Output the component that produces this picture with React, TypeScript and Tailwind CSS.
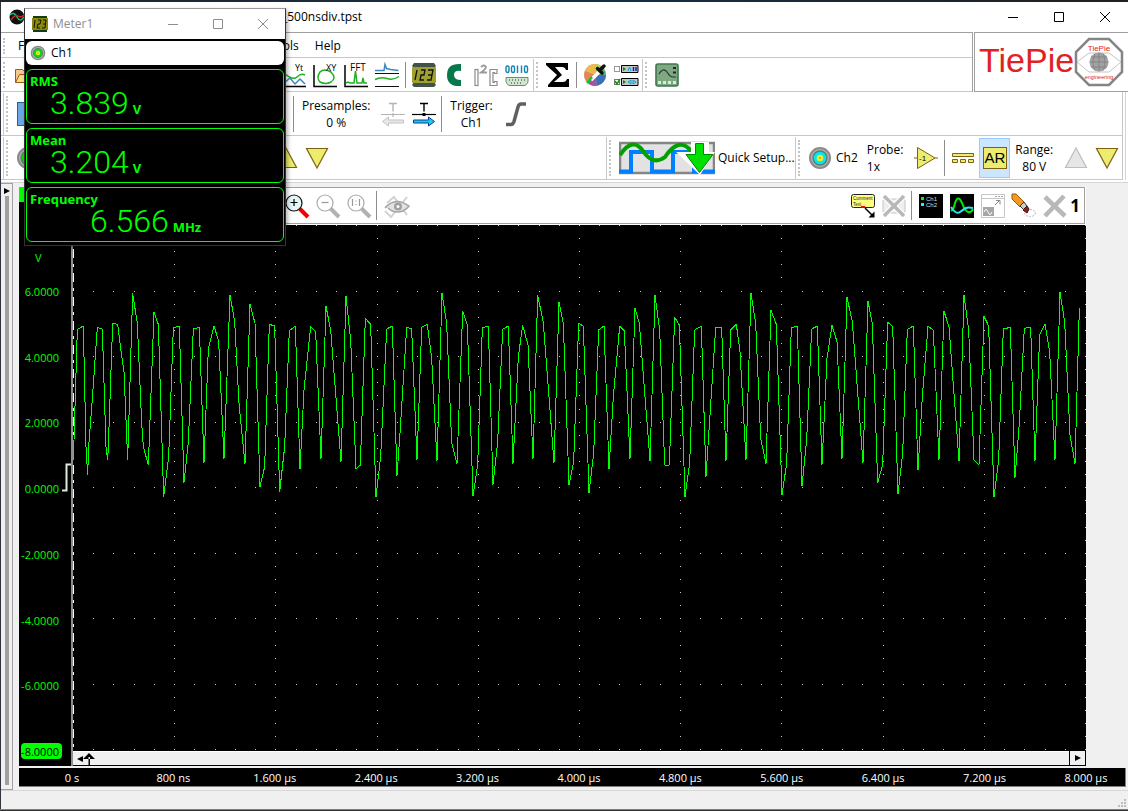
import type { ReactNode } from 'react';
import clsx from 'clsx';

const voltLabels = ['6.0000', '4.0000', '2.0000', '0.0000', '-2.0000', '-4.0000', '-6.0000', '-8.0000'];

const timeLabels = [
  '0 s',
  '800 ns',
  '1.600 µs',
  '2.400 µs',
  '3.200 µs',
  '4.000 µs',
  '4.800 µs',
  '5.600 µs',
  '6.400 µs',
  '7.200 µs',
  '8.000 µs',
];

const readings = [
  { name: 'RMS', value: '3.839', unit: 'V', indent: 'pl-5' },
  { name: 'Mean', value: '3.204', unit: 'V', indent: 'pl-5' },
  { name: 'Frequency', value: '6.566', unit: 'MHz', indent: 'pl-[60px]' },
];

// sweep memory, three blocks in thirds of a screen pixel
const sweep = [
  {
    offset: -9,
    points:
      '10,540 12,480 22,148 40,138 48,500 53,585 56,500 66,370 82,142 97,147 108,500 113,540 115,500 128,130 143,133 152,205 162,275 173,540 188,40 202,130 215,430 220,500 235,555 252,97 265,133 281,650 296,530 310,143 328,138 342,608 355,485 370,147 388,142 402,548 415,205 432,137 446,185 462,537 480,45 494,125 507,370 525,551 540,72 555,130 570,620 584,560 598,133 614,138 629,635 644,500 658,152 676,138 690,567 702,330 722,140 737,155 753,537 768,79 782,150 813,545 828,49 842,180 858,566 871,555 886,115 902,133 918,650 932,530 950,147 967,138 981,587 990,460',
  },
  {
    offset: 981,
    points:
      '0,460 20,142 35,147 51,540 65,142 82,133 95,235 111,543 126,39 140,130 155,487 171,551 188,94 202,135 219,648 233,555 247,143 265,138 279,614 293,485 308,148 325,138 339,551 355,230 368,136 384,195 399,537 413,45 430,128 462,548 477,67 490,130 507,614 521,545 536,130 550,138 567,638 581,520 596,150 612,138 627,567 640,350 659,139 673,152 690,537 705,84 718,130 750,543 765,45 779,150 794,555 808,555 824,112 838,135 855,650 869,550 884,150 904,138 918,590 947,143 965,142 978,543 992,150 1009,133 1020,215',
  },
  {
    offset: 2001,
    points:
      '0,215 18,540 33,40 47,130 62,475 78,551 93,91 109,133 126,644 140,550 154,143 172,138 186,617 200,480 215,147 232,138 246,554 261,235 276,136 291,185 306,537 321,52 337,125 369,548 384,64 397,130 413,608 428,555 443,127 458,139 474,641 488,520 502,148 520,138 534,570 547,350 564,139 580,150 597,540 612,94 627,140 657,543 672,45 686,150 702,540 717,554 732,109 746,138 762,650 776,540 790,147 811,142 825,593 838,430 853,145 872,142 885,543 899,163 915,133 929,215 945,540 960,37 974,125 990,465 1005,551 1018,84',
  },
];

function gridPath() {
  let d = '';
  for (let i = 1; i <= 50; i++) {
    for (let j = 0; j <= 40; j++) {
      if (i % 5 !== 0 && j % 5 !== 0) continue;
      const x = Math.round(i * 20.24) * 3;
      const y = Math.round(j * 13.11) * 3;
      d += `M${x} ${y}h3v3h-3z`;
    }
  }
  return d;
}

function Tool({ label, children, width = 24 }: { label: string; children: ReactNode; width?: number }) {
  return (
    <button type="button" aria-label={label} className="shrink-0">
      <svg width={width} height={24} viewBox={`0 0 ${width} 24`} fill="none" className="overflow-visible">
        {children}
      </svg>
    </button>
  );
}

function Sep() {
  return (
    <div className="flex w-[13px] shrink-0 justify-center self-stretch py-[3px]">
      <div className="w-px bg-[#8c8c8c]" />
    </div>
  );
}

function Grip({ line = true }: { line?: boolean }) {
  return (
    <div className={clsx('flex w-[13px] shrink-0 self-stretch py-[3px] pl-[2px]', line && 'border-l border-[#c8c8c8]')}>
      <div className="w-0 border-l-2 border-dotted border-[#c4c4c4]" />
    </div>
  );
}

function Stack({ top, bottom, left }: { top: string; bottom: string; left?: boolean }) {
  return (
    <div className={clsx('flex shrink-0 flex-col text-xs leading-[17px]', !left && 'items-center')}>
      <span>{top}</span>
      <span>{bottom}</span>
    </div>
  );
}

function Connector({ color }: { color: string }) {
  return (
    <>
      <circle cx="12" cy="12" r="10" fill="#b4b4b4" stroke="#8a8a8a" strokeWidth="2" />
      <circle cx="12" cy="12" r="7" fill={color} stroke="#5c7a7a" strokeWidth="1.4" />
      <circle cx="12" cy="12" r="3.3" fill="#f2e635" />
      <circle cx="12" cy="12" r="0.8" fill="#a07800" />
    </>
  );
}

function Triangle({ down, off }: { down?: boolean; off?: boolean }) {
  return (
    <path
      d={down ? 'M1.5 2.5h21L12 22z' : 'M1.5 21.500h21L12 2z'}
      fill={off ? '#e6e6e6' : '#ecec6e'}
      stroke={off ? '#bdbdbd' : '#806010'}
      strokeWidth="1.2"
    />
  );
}

function WindowButtons({ faded }: { faded?: boolean }) {
  return (
    <div className={clsx('flex', faded ? 'gap-[21px] text-[#8e8e8e]' : 'gap-[22px] text-black')}>
      <Tool label="Minimize"><path d="M7 12.500h10" stroke="currentColor" /></Tool>
      <Tool label="Maximize"><path d="M7.500 7.500h9v9h-9z" stroke="currentColor" /></Tool>
      <Tool label="Close"><path d="M7 7l10 10M17 7L7 17" stroke="currentColor" /></Tool>
    </div>
  );
}

function Logo() {
  return (
    <div className="flex w-[154px] shrink-0 items-center border-t border-b border-l border-[#a0a0a0] pl-1">
      <span className="pb-[5px] font-['Liberation_Sans',sans-serif] text-[34px] leading-[48px] text-[#e12222]">TiePie</span>
      <svg width="50" height="50" viewBox="0 0 50 50" fill="none" className="shrink-0">
        <path d="M15 2h20l13 13v20L35 48H15L2 35V15z" stroke="#858585" strokeWidth="2.500" />
        <path d="M3 25L15 16h20l12 9-12 10H15z" stroke="#c4c4c4" />
        <circle cx="25" cy="25" r="9.500" fill="#a2a2a2" />
        <path d="M25 15.500v19M15.500 25h19M17 20h16M17 30h16M21 16.500q-4 8.500 0 17M29 16.500q4 8.500 0 17" stroke="#7d7d7d" strokeWidth="0.7" />
        <text x="25" y="14" textAnchor="middle" fontSize="8" fontFamily="Liberation Sans" fill="#e12222">TiePie</text>
        <text x="25" y="42" textAnchor="middle" fontSize="5.500" fontFamily="Liberation Sans" fill="#e12222">engineering</text>
      </svg>
    </div>
  );
}

function MainToolbar() {
  return (
    <div className="flex h-[34px] items-center border-b border-[#c8c8c8] pt-px">
      <Grip line={false} />
      <div className="flex w-[268px] shrink-0">
        <Tool label="Open">
          <path d="M1.500 19.500v-13h7l2 2h8v3" fill="#f8c890" stroke="#a05a10" />
          <path d="M1.500 19.500l4-8h17l-4 8z" fill="#fae08c" stroke="#a05a10" />
        </Tool>
      </div>
      <div className="flex shrink-0 gap-[7px]">
        <Tool label="Yt graph">
          <path d="M1.500 1v22.500H24" stroke="#000" strokeWidth="1.500" />
          <path d="M2 20l6-5 5 6 5-5 5 5" stroke="#3a88c0" strokeWidth="1.500" />
          <path d="M2 10q9 8 13 4t8-2" stroke="#1fb01f" strokeWidth="1.500" />
          <text x="13" y="8" fontSize="9" fontFamily="Open Sans" fill="#000">Yt</text>
        </Tool>
        <Tool label="XY graph">
          <path d="M1 2v21.500H24" stroke="#000" strokeWidth="1.500" />
          <path d="M7 9q4-4 11 0 6 6 0 10-5 3-11 0-4-4 0-10z" stroke="#1fb01f" strokeWidth="1.500" />
          <text x="13" y="8" fontSize="9" fontFamily="Open Sans" fill="#000">XY</text>
        </Tool>
        <Tool label="FFT graph">
          <path d="M1 2v21.500H24" stroke="#000" strokeWidth="1.500" />
          <path d="M2 20l2-1 2 1h4l1.500-12L13 20h5l1-5 1 5h3" stroke="#1fb01f" strokeWidth="1.500" />
          <text x="6" y="8" fontSize="10" fontFamily="Open Sans" fill="#000">FFT</text>
        </Tool>
        <Tool label="Value windows">
          <path d="M0 7.500h9l1-6 1.500 4 4 1 8 1" stroke="#3a88c0" strokeWidth="1.500" />
          <path d="M0 16.500q6-3 12-1t12-2" stroke="#1fb01f" strokeWidth="1.500" />
          <path d="M0 10.500h24M0 23.500h24" stroke="#111" />
        </Tool>
      </div>
      <Sep />
      <div className="flex shrink-0 gap-[7px]">
        <Tool label="Meter">
          <path d="M2 0h20l2 3-2 2v14l2 3-2 2H2l-2-2 2-3V5L0 3z" fill="#42524a" />
          <rect x="0" y="4" width="24" height="16" rx="1" fill="#a0a030" />
          <path d="M5 7L3 17M9 7h4l-1 5H9l-1 5h4M16 7h5l-2 10h-4M16 12h4" stroke="#111" strokeWidth="1.300" />
        </Tool>
        <Tool label="Controller">
          <path d="M18 1v7q-7-1-7 4t7 5v6Q4 24 4 12T18 1z" fill="#07794a" />
        </Tool>
        <Tool label="I2C">
          <rect x="1" y="6.500" width="3" height="16" stroke="#8c8c8c" strokeWidth="1.200" />
          <path d="M7 4q3-3 5 0 0 2-5 5.500h6" stroke="#999" strokeWidth="1.800" />
          <path d="M23 10.500v-4h-7v16h7v-4h-2.500v1h-1.500v-10h1.500v1z" stroke="#8c8c8c" strokeWidth="1.200" />
        </Tool>
        <Tool label="Serial">
          <g stroke="#1283b5" strokeWidth="1.400">
            <rect x="1" y="3" width="3" height="6.500" rx="1.500" />
            <rect x="6.500" y="3" width="3" height="6.500" rx="1.500" />
            <path d="M12.500 2.500v7.500M16.500 2.500v7.500" />
            <rect x="19.500" y="3" width="3" height="6.500" rx="1.500" />
          </g>
          <path d="M1 14.500h22v4q0 2-3 4H4q-3-2-3-4z" fill="#cfe6cf" stroke="#6b8c70" />
          <path d="M4 17h16M6 20h12" stroke="#333" strokeDasharray="1 2" />
        </Tool>
      </div>
      <div className="w-1 shrink-0" />
      <Grip />
      <Tool label="Sum"><path d="M0 0h22v7h-2q-1-3-4-3H9l7 8-8 7h9q3 0 4-3h2v8H2v-2l9-10L0 2z" fill="#000" /></Tool>
      <Sep />
      <div className="flex shrink-0 gap-[7px]">
        <Tool label="Colors">
          <circle cx="12" cy="12" r="11" fill="#c8b0a0" />
          <path d="M12 12V1A11 11 0 0 0 2 8z" fill="#efb84a" />
          <path d="M12 12L2 8a11 11 0 0 0 2 11z" fill="#e58455" />
          <path d="M12 12L4 19a11 11 0 0 0 10 3.800z" fill="#a64fa5" />
          <path d="M12 12l2 10.800A11 11 0 0 0 23 12z" fill="#3a70b8" />
          <path d="M12 12h11a11 11 0 0 0-5-9z" fill="#56b07b" />
          <path d="M12 12l6-9a11 11 0 0 0-6-2z" fill="#b9cf5c" />
          <path d="M17 8L8 17" stroke="#fff" strokeWidth="3.500" />
          <path d="M9 14l-5 6" stroke="#00d020" strokeWidth="2.500" />
          <path d="M14.500 5.500l4.500 4.500M17 7l4-4" stroke="#111" strokeWidth="3.500" strokeLinecap="round" />
        </Tool>
        <Tool label="Object list">
          <rect x="0.500" y="3.500" width="5" height="5" stroke="#999" />
          <rect x="0.500" y="16.500" width="5" height="5" stroke="#777" />
          <path d="M1 18l2 3 3-5" stroke="#0b9b0b" strokeWidth="1.500" />
          <path d="M7.500 2.500h16.500v7h-16.500zM7.500 15.500h16.500v7h-16.500z" fill="#c6c6c6" stroke="#000" />
          <path d="M9 4l3 2-3 2zM9 17l3 2-3 2z" fill="#0a8a0a" />
          <path d="M14 8l1.500-4L17 8M17 17l-3 2 3 2zM19 17l3 2-3 2z" stroke="#00a6d8" />
          <path d="M19.500 4v4M22 4v4" stroke="#1313b8" strokeWidth="1.400" />
        </Tool>
      </div>
      <div className="w-1 shrink-0" />
      <Grip />
      <Tool label="Oscilloscope">
        <rect x="1" y="1" width="22" height="22" rx="2" fill="#80a880" stroke="#3d7850" strokeWidth="1.600" />
        <path d="M4 11q4-7 8-2 3 5 6 5h3" stroke="#22373c" strokeWidth="1.200" />
        <path d="M18 5h3M18 9.500h3" stroke="#223" strokeWidth="2" />
        <path d="M3 19.500h18" stroke="#d5edd5" strokeWidth="3" strokeDasharray="3 2" />
      </Tool>
    </div>
  );
}

function InstrumentBar() {
  return (
    <div className="flex h-11 items-center border-b border-[#c8c8c8] pt-px pl-[2px]">
      <Grip />
      <button type="button" aria-label="Stop" className="ml-px h-6 w-[271px] shrink-0">
        <span className="block h-6 w-6 border border-[#2060a0] bg-[#6ca6e4]" />
      </button>
      <div className="mr-2 ml-[5px] h-9 w-px shrink-0 bg-[#8c8c8c]" />
      <Stack top="Presamples:" bottom="0 %" />
      <div className="ml-[11px] flex shrink-0 gap-[7px]">
        <Tool label="Less presamples">
          <path d="M8 1.500h8M12 1.500v8" stroke="#b4b4b4" strokeWidth="1.400" />
          <path d="M0 12.500h24M12 11v4" stroke="#b4b4b4" strokeWidth="1.200" />
          <path d="M1.500 19.500l6-4.500v3h15v3h-15v3z" fill="#e8e8e8" stroke="#c2c2c2" />
        </Tool>
        <Tool label="More presamples">
          <path d="M8 1.500h8M12 1.500v8" stroke="#000" strokeWidth="1.400" />
          <path d="M0 12.500h24" stroke="#000" strokeWidth="1.200" />
          <rect x="10.500" y="11" width="3" height="3" fill="#000" />
          <path d="M22.500 19.500l-6-4.500v3h-15v3h15v3z" fill="#10d0e8" stroke="#103a9a" />
        </Tool>
      </div>
      <div className="mr-2 ml-[5px] h-9 w-px shrink-0 bg-[#8c8c8c]" />
      <Stack top="Trigger:" bottom="Ch1" />
      <div className="ml-[11px] flex">
        <Tool label="Trigger kind"><path d="M2 22.500h5q2 0 3-3L14 5q1-3 3-3h5" stroke="#606060" strokeWidth="3.500" /></Tool>
      </div>
    </div>
  );
}

function ChannelBar() {
  return (
    <div className="flex h-11 items-center border-b border-[#c8c8c8] pt-px pl-[2px]">
      <Grip />
      <div className="flex w-[258px] shrink-0"><Tool label="Ch1"><Connector color="#00e000" /></Tool></div>
      <div className="flex w-[332px] shrink-0 gap-[7px]">
        <Tool label="Ch1 range up"><Triangle /></Tool>
        <Tool label="Ch1 range down"><Triangle down /></Tool>
      </div>
      <Grip />
      <button type="button" className="flex w-[176px] shrink-0 items-center gap-[3px] text-xs whitespace-nowrap">
        <svg width="96" height="34" viewBox="0 0 96 34" fill="none" className="shrink-0">
          <rect x="1" y="2" width="94" height="30" fill="#e2e2e2" stroke="#858585" strokeWidth="2.500" />
          <path d="M0 30.500h12V11h21v19.500h21V11h21v19.500h21" stroke="#0080ff" strokeWidth="4" />
          <path d="M1 14Q14-5 24 10T46 16Q60-5 72 10" stroke="#00a000" strokeWidth="4" />
          <path d="M57 11h15V1h18v10h6L81 34z" fill="#fff" />
          <path d="M76.500 2.500h8v11h9.500L80.500 31.500 67 13.500h9.500z" fill="#00e000" stroke="#008a00" />
        </svg>
        Quick Setup...
      </button>
      <Grip />
      <div className="flex shrink-0"><Tool label="Ch2"><Connector color="#00e8e8" /></Tool></div>
      <span className="mr-[9px] ml-1 text-xs">Ch2</span>
      <Stack top="Probe:" bottom="1x" left />
      <div className="ml-[11px] flex shrink-0">
        <Tool label="Invert">
          <path d="M0 12h3M21 12h3" stroke="#806010" strokeWidth="1.200" />
          <path d="M3.500 1.500v21L21 12z" fill="#ecec6e" stroke="#806010" />
          <text x="5" y="15" fontSize="8" fontFamily="Liberation Sans" fill="#000">-1</text>
        </Tool>
      </div>
      <Sep />
      <div className="flex shrink-0">
        <Tool label="Coupling">
          <path d="M1.500 7.500h21v3h-21zM1.500 13.500h5v3h-5zM9.500 13.500h5v3h-5zM17.500 13.500h5v3h-5z" fill="#ecec6e" stroke="#806010" />
        </Tool>
      </div>
      <button type="button" className="ml-1 flex h-10 w-[31px] shrink-0 items-center justify-center border border-[#99ccff] bg-[#cce6ff]">
        <span className="flex h-[22px] w-6 items-center justify-center border border-[#806010] bg-[#ecec6e] font-['Liberation_Sans',sans-serif] text-[15px]">AR</span>
      </button>
      <div className="mr-[11px] ml-[5px]"><Stack top="Range:" bottom="80 V" /></div>
      <div className="flex shrink-0 gap-[7px]">
        <Tool label="Ch2 range up"><Triangle off /></Tool>
        <Tool label="Ch2 range down"><Triangle down /></Tool>
      </div>
    </div>
  );
}

function GraphToolbar() {
  return (
    <div className="mr-px flex h-[37px] items-center justify-between border border-[#a0a0a0] bg-white pr-1">
      <div className="flex items-center pl-[211px]">
        <div className="flex gap-[7px]">
          <Tool label="Zoom in">
            <path d="M14 14l9 9" stroke="#f00000" strokeWidth="4" />
            <circle cx="9" cy="9" r="8" fill="#e4f8fa" stroke="#111" strokeWidth="1.200" />
            <path d="M5.500 8.500h7M9 5v7" stroke="#000" strokeWidth="1.200" />
          </Tool>
          <Tool label="Zoom out">
            <path d="M14 14l9 9" stroke="#b2b2b2" strokeWidth="4" />
            <circle cx="9" cy="9" r="8" fill="#fff" stroke="#aaa" strokeWidth="1.200" />
            <path d="M5.500 8.500h7" stroke="#999" strokeWidth="1.200" />
          </Tool>
          <Tool label="Zoom 1:1">
            <path d="M14 14l9 9" stroke="#b2b2b2" strokeWidth="4" />
            <circle cx="9" cy="9" r="8" fill="#fff" stroke="#aaa" strokeWidth="1.200" />
            <path d="M5.500 5v7M12.500 5v7M9 6.500v1M9 10v1" stroke="#999" strokeWidth="1.200" />
          </Tool>
        </div>
        <div className="mr-2 ml-[5px] h-[29px] w-px bg-[#8c8c8c]" />
        <Tool label="Show">
          <path d="M0 17L6 23 22 3M2 9l7-6 13 18" stroke="#d2d2d2" strokeWidth="2" />
          <path d="M0 14q10-12 24-2-2 3-6 5-9 3-15-3" fill="#e2e2e2" stroke="#a4a4a4" strokeWidth="1.500" />
          <circle cx="13" cy="12.500" r="4" fill="#a0a0a0" />
          <circle cx="13" cy="12.500" r="1.500" fill="#fff" />
        </Tool>
      </div>
      <div className="flex items-center">
        <div className="flex gap-[7px]">
          <Tool label="Add comment">
            <rect x="0.500" y="0.500" width="23" height="13" rx="2" fill="#ffff80" stroke="#222" />
            <text x="2" y="6" fontSize="4.500" fontFamily="Liberation Sans" fill="#222">Comment</text>
            <text x="2" y="11.500" fontSize="4.500" fontFamily="Liberation Sans" fill="#222">Text</text>
            <path d="M14 14l7 7" stroke="#000" strokeWidth="1.500" />
            <path d="M23.500 23.500v-6l-6 6z" fill="#000" />
            <rect x="10" y="12" width="4" height="2" fill="#f00" />
          </Tool>
          <Tool label="Remove comments">
            <rect x="1" y="5" width="22" height="14" rx="2" fill="#eee" stroke="#c6c6c6" />
            <path d="M2 2l20 20M22 2L2 22" stroke="#fff" strokeWidth="6" />
            <path d="M2 2l20 20M22 2L2 22" stroke="#b8b8b8" strokeWidth="3.500" />
          </Tool>
        </div>
        <div className="mr-[7px] ml-[5px] h-[29px] w-px bg-[#8c8c8c]" />
        <div className="flex gap-[7px]">
          <Tool label="Legend">
            <rect width="24" height="24" fill="#000" />
            <rect x="2" y="3" width="3" height="3" fill="#0f0" />
            <rect x="2" y="9" width="3" height="3" fill="#0ff" />
            <text x="7" y="7" fontSize="6" fontFamily="Liberation Sans" fill="#ddd">Ch1</text>
            <text x="7" y="13" fontSize="6" fontFamily="Liberation Sans" fill="#ddd">Ch2</text>
          </Tool>
          <Tool label="Envelope">
            <rect width="24" height="24" fill="#000" />
            <path d="M1 17q3-2 4-8 3-9 7 0 3 8 6 9t5-3" stroke="#00e800" strokeWidth="2" />
            <path d="M1 13q5 8 9 5t6-4 7 0" stroke="#20e8e8" strokeWidth="2" />
          </Tool>
          <Tool label="Copy to new graph">
            <path d="M0.500 0.500h23v23H0.500zM0.500 4.500h23" stroke="#c6c6c6" />
            <path d="M14 2.500h8" stroke="#aaa" strokeDasharray="2 1" />
            <rect x="2" y="13" width="11" height="9" fill="#a6a6a6" />
            <path d="M3 18q2-5 4 0t4 0" stroke="#fff" />
            <path d="M14 11l5-5M15 6.500h4v4" stroke="#888" />
          </Tool>
          <Tool label="Erase">
            <ellipse cx="18" cy="19" rx="5.500" ry="3.500" stroke="#bbb" strokeDasharray="2 1" />
            <path d="M0 0l4 0 8 8-4 5-8-8z" fill="#f09a20" stroke="#a05800" />
            <path d="M12 8l3 4-3 4-4-4z" fill="#ccc" stroke="#333" />
            <path d="M15 12l2 3-2 4-4-3z" fill="#8e2020" stroke="#401010" />
          </Tool>
          <Tool label="Remove"><path d="M2 3l20 19M21 2L2 22" stroke="#b8b8b8" strokeWidth="4.500" /></Tool>
        </div>
        <span className="ml-[3px] text-[17px] leading-6 font-bold">1</span>
      </div>
    </div>
  );
}

function Meter() {
  return (
    <section className="absolute top-2 left-6 w-[262px] border border-[#333] border-t-[#999] bg-black shadow-[2px_2px_4px_rgba(0,0,0,0.3)]">
      <header className="flex h-[30px] items-center justify-between bg-white pr-[10px] pl-[7px] text-xs text-[#8e8e8e]">
        <div className="flex items-center gap-[5px]">
          <svg width="16" height="16" viewBox="0 0 16 16" fill="none">
            <path d="M1 0h14v16H1z" fill="#123d12" />
            <path d="M0 2h16v12H0z" fill="#8a8a08" />
            <path d="M3 4L2 12M6 4h3L8 8H6l-1 4h3M11 4h3l-1 8h-3M11 8h3" stroke="#111" />
          </svg>
          Meter1
        </div>
        <WindowButtons faded />
      </header>
      <div className="flex flex-col gap-1 p-px pt-[2px] pb-[3px]">
        <div className="flex h-6 items-center gap-[5px] rounded-md bg-white pl-1 text-xs">
          <svg width="16" height="16" viewBox="0 0 24 24"><Connector color="#00e000" /></svg>
          Ch1
        </div>
        {readings.map((r) => (
          <div key={r.name} className="h-[55px] rounded-md border border-[#00ff00] pt-[2px] pl-[3px] text-[13px] font-bold text-[#00ff00]">
            <div className="leading-[18px]">{r.name}</div>
            <div className={clsx('flex items-baseline gap-1 pt-px leading-6', r.indent)}>
              <span className="font-['Roboto',sans-serif] text-[32px] leading-6 font-light">{r.value}</span>
              <span>{r.unit}</span>
            </div>
          </div>
        ))}
      </div>
    </section>
  );
}

function Plot() {
  return (
    <svg className="block min-h-0 w-full flex-1 bg-black" viewBox="0 0 3039 1578" preserveAspectRatio="none" fill="none" shapeRendering="crispEdges">
      <path d={gridPath()} fill="#c8c8c8" />
      <path d="M1.500 0V1578" stroke="#fff" strokeWidth="3" strokeDasharray="27 18 9 18" />
      {sweep.map((block) => (
        <polyline
          key={block.offset}
          points={block.points}
          transform={`translate(${block.offset} 165)`}
          stroke="#00ff00"
          strokeWidth="3"
          strokeLinejoin="bevel"
        />
      ))}
    </svg>
  );
}

export default function App() {
  return (
    <div className="relative flex h-screen flex-col overflow-hidden bg-[#f0f0f0] font-['Open_Sans',sans-serif] text-black">
      <div className="h-[2px] shrink-0 bg-linear-to-r from-[#20242c] via-[#123048] to-[#202020]" />
      <div className="flex min-h-0 flex-1 flex-col border-l border-[#30343c]">
        <header className="flex h-[30px] shrink-0 items-center justify-between bg-white pr-[11px] pl-2">
          <div className="flex items-center">
            <svg width="16" height="16" viewBox="0 0 16 16" fill="none">
              <circle cx="8" cy="8" r="7.500" fill="#111" />
              <path d="M1 6q4-4 7 2t7 0" stroke="#00c878" strokeWidth="1.500" />
              <path d="M2 11q4-6 7-4t6-1" stroke="#e02020" strokeWidth="1.500" />
            </svg>
            <h1 className="pl-[257px] text-xs">_500nsdiv.tpst</h1>
          </div>
          <WindowButtons />
        </header>
        <div className="flex shrink-0 bg-white">
          <div className="mr-px min-w-0 flex-1 border-t border-r border-[#a0a0a0]">
            <nav className="flex h-[25px] items-center border-b border-[#c8c8c8] pt-[2px] text-xs">
              <Grip line={false} />
              <button type="button" className="ml-1 w-[251px] text-left">File</button>
              <button type="button" className="mr-4">Tools</button>
              <button type="button">Help</button>
            </nav>
            <MainToolbar />
          </div>
          <Logo />
        </div>
        <div className="shrink-0 border-b border-[#d4d4d4] bg-white pr-[2px] pb-[2px]">
          <div className="border-r border-[#d4d4d4] pr-[2px]">
            <div className="border-r border-[#c8c8c8]">
              <InstrumentBar />
              <ChannelBar />
            </div>
          </div>
        </div>

        <main className="flex min-h-0 flex-1">
          <div className="flex w-3 shrink-0 flex-col items-center border-t border-r border-b border-[#a0a0a0] pt-1">
            <svg width="6" height="6" viewBox="0 0 6 6"><path d="M0 0l6 3-6 3z" /></svg>
            <div className="mt-[2px] mb-1 w-1 flex-1 bg-[#a0a0a0]" />
          </div>
          <div className="flex min-w-0 flex-1 flex-col pt-1 pb-[3px] pl-[6px]">
            <div className="flex min-h-0 flex-1 pr-[42px]">
              <div className="flex w-[54px] shrink-0 flex-col border-r-2 border-[#909090] bg-black pb-[15px] text-[11px] leading-[14px] text-[#00ff00]">
                <div className="h-[38px] shrink-0"><div className="h-[15px] bg-[#00ff00]" /></div>
                {voltLabels.map((label, i) => (
                  <div key={label} className="relative flex flex-1 items-end justify-end pr-[9px]">
                    {i === 0 && <span className="absolute top-1/2 left-4 -translate-y-1/2">V</span>}
                    <span className={clsx('translate-y-1/2 pt-[2px]', i === 7 ? 'rounded bg-[#00ff00] pr-[3px] text-black' : 'pr-[3px]')}>{label}</span>
                    {i === 3 && (
                      <svg className="absolute right-0 -bottom-1" width="9" height="29" viewBox="0 0 9 29" fill="none">
                        <path d="M0 27.500h4.500v-26H9" stroke="#dfeadf" strokeWidth="2" />
                      </svg>
                    )}
                  </div>
                ))}
              </div>
              <div className="flex min-w-0 flex-1 flex-col bg-white">
                <GraphToolbar />
                <div className="h-px shrink-0" />
                <Plot />
                <div className="flex h-[15px] shrink-0 border-r border-b border-black bg-[#f0f0f0]">
                  <button type="button" aria-label="Scroll left" className="flex-1 border-t border-white">
                    <svg width="24" height="14" viewBox="0 0 24 14">
                      <path d="M4 7l6-3v6zM10 7l6-6 6 6zM15.500 5v9h1.500V5z" />
                    </svg>
                  </button>
                  <button type="button" aria-label="Scroll right" className="flex w-4 items-center justify-center border-l border-black">
                    <svg width="6" height="6" viewBox="0 0 6 6"><path d="M0 0l6 3-6 3z" /></svg>
                  </button>
                </div>
              </div>
            </div>
            <div className="mt-[2px] mr-[2px] flex h-[19px] shrink-0 items-center justify-between border-r border-b border-[#808080] bg-black pt-[2px] pr-[39px] pl-[53px] text-[11px] text-white">
              {timeLabels.map((label) => (
                <span key={label} className="flex w-0 justify-center whitespace-nowrap">{label}</span>
              ))}
            </div>
          </div>
        </main>

        <footer className="flex h-[19px] shrink-0 items-end justify-end border-t border-[#d7d7d7] pr-[2px] pb-[2px]">
          <svg width="8" height="8" viewBox="0 0 8 8" fill="#bdbdbd">
            <path d="M6 0h2v2H6zM3 3h2v2H3zM6 3h2v2H6zM0 6h2v2H0zM3 6h2v2H3zM6 6h2v2H6z" />
          </svg>
        </footer>
      </div>
      <div className="h-[2px] shrink-0 border-t border-[#808080] bg-[#303030]" />
      <Meter />
    </div>
  );
}
